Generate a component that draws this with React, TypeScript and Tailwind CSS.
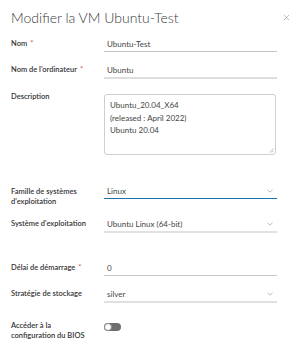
import { X } from 'lucide-react';
import type { ReactNode } from 'react';

const font = { fontFamily: 'Lato, "Noto Sans", sans-serif' };

function Label({ children, required }: { children: ReactNode; required?: boolean }) {
  return (
    <div className="w-[93px] shrink-0 text-[7.5px] font-semibold leading-[14px] text-[#333]">
      {children}
      {required ? <span className="ml-[3px] text-[#d9534f]">*</span> : null}
    </div>
  );
}

function Chevron() {
  return (
    <svg width="6" height="4" viewBox="0 0 6 4" className="mr-[4px] shrink-0" aria-hidden="true">
      <path d="M0.5 0.8 L3 3.2 L5.5 0.8" fill="none" stroke="#a8a8a8" strokeWidth="0.8" />
    </svg>
  );
}

export default function App() {
  return (
    <div className="h-[349px] w-[300px] overflow-hidden bg-white px-[11px]" style={font}>
      <div className="flex h-[34px] items-center justify-between">
        <h1 className="text-[14px] font-light text-[#3a3a3a]">Modifier la VM Ubuntu-Test</h1>
        <X className="mr-[-2px] size-[9px] text-[#8a8a8a]" strokeWidth={1.5} aria-hidden="true" />
      </div>

      <div className="flex flex-col pt-[3px]">
        <div className="flex">
          <Label required>Nom</Label>
          <div className="h-[15px] w-[173px] border-b border-[#c4c4c4] pl-[3px] text-[8px] leading-[14px] text-[#454545]">
            Ubuntu-Test
          </div>
        </div>

        <div className="mt-[11px] flex">
          <Label required>Nom de l'ordinateur</Label>
          <div className="h-[16px] w-[173px] border-b-2 border-[#dedede] pl-[3px] text-[8px] leading-[14px] text-[#454545]">
            Ubuntu
          </div>
        </div>

        <div className="mt-[11px] flex">
          <Label>Description</Label>
          <div className="relative mt-[4px] h-[61px] w-[172px] rounded-[3px] border border-[#cfcfcf] px-[5px] pt-[4px] text-[8px] leading-[12.7px] text-[#454545]">
            <div>Ubuntu_20.04_X64</div>
            <div>(released : April 2022)</div>
            <div>Ubuntu 20.04</div>
            <svg width="5" height="5" viewBox="0 0 5 5" className="absolute right-[1px] bottom-[1px]" aria-hidden="true">
              <path d="M4.5 0.5 L0.5 4.5 M4.5 2.5 L2.5 4.5" stroke="#9a9a9a" strokeWidth="0.6" />
            </svg>
          </div>
        </div>

        <div className="mt-[29px] flex">
          <div className="w-[93px] shrink-0 pt-[3px] text-[7.5px] font-semibold leading-[10px] text-[#333]">
            Famille de systèmes
            <br />
            d'exploitation
          </div>
          <div className="flex h-[15px] w-[173px] items-center justify-between border-b-[1.5px] border-[#1a73a8] pl-[3px] text-[8px] leading-[14px] text-[#454545]">
            <span>Linux</span>
            <Chevron />
          </div>
        </div>

        <div className="mt-[10px] flex">
          <Label>Système d'exploitation</Label>
          <div className="flex h-[16px] w-[173px] items-center justify-between border-b-2 border-[#e2e2e2] pl-[3px] text-[8px] leading-[14px] text-[#454545]">
            <span>Ubuntu Linux (64-bit)</span>
            <Chevron />
          </div>
        </div>

        <div className="mt-[28px] flex">
          <Label required>Délai de démarrage</Label>
          <div className="h-[15px] w-[173px] border-b border-[#c8c8c8] pl-[3px] text-[8px] leading-[14px] text-[#454545]">
            0
          </div>
        </div>

        <div className="mt-[11px] flex">
          <Label>Stratégie de stockage</Label>
          <div className="flex h-[16px] w-[173px] items-center justify-between border-b-2 border-[#e0e0e0] pl-[3px] text-[8px] leading-[14px] text-[#454545]">
            <span>silver</span>
            <Chevron />
          </div>
        </div>

        <div className="mt-[18px] flex">
          <div className="w-[93px] shrink-0 text-[7.5px] font-semibold leading-[10px] text-[#333]">
            Accéder à la
            <br />
            configuration du BIOS
          </div>
          <div className="mt-[2px] flex h-[8px] w-[17px] items-center rounded-full bg-[#6e6e6e]">
            <span className="size-[8px] rounded-full border border-[#8a8a8a] bg-white" />
          </div>
        </div>
      </div>
    </div>
  );
}
